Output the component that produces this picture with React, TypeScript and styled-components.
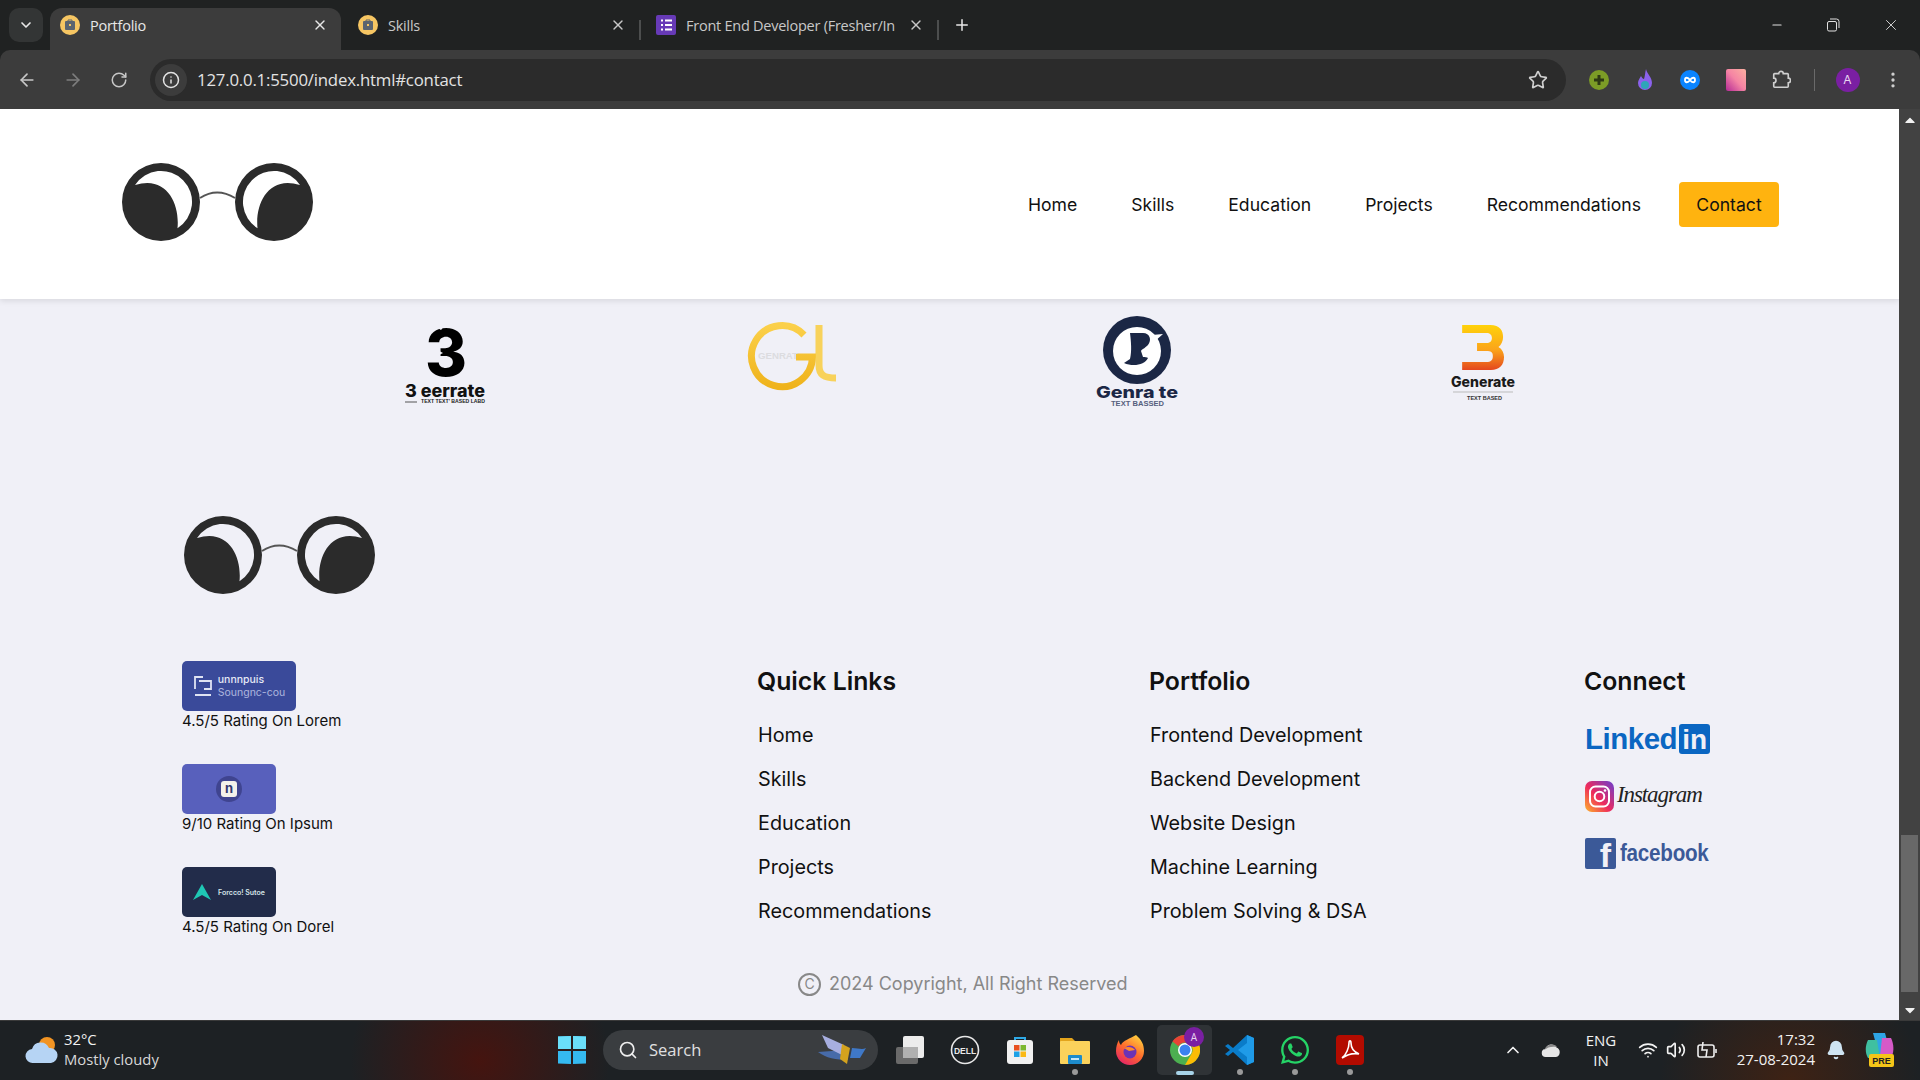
import { createGlobalStyle } from 'styled-components';
import styled from 'styled-components';
import {
  ArrowLeft, ArrowRight, Bell, ChevronDown, ChevronUp, Info, Minus, Plus,
  RotateCw, Search, Star, Volume2, Wifi, X, EllipsisVertical,
} from 'lucide-react';
import { FaWhatsapp, FaCaretUp, FaCaretDown } from 'react-icons/fa';

const GlobalStyle = createGlobalStyle`
  html, body { margin: 0; padding: 0; height: 100%; overflow: hidden; background: #202222; }
  * { box-sizing: border-box; }
  #root { height: 100vh; }
`;

const Screen = styled.div`
  display: flex;
  flex-direction: column;
  width: 1920px;
  height: 1080px;
  overflow: hidden;
  font-family: Inter, "Liberation Sans", sans-serif;
`;

/* ---------- browser chrome ---------- */

const TabStrip = styled.div`
  display: flex;
  align-items: flex-end;
  height: 50px;
  padding-left: 9px;
  background: #202222;
  font-family: "Open Sans", "Noto Sans", sans-serif;
`;

const TabMenu = styled.div`
  display: flex;
  align-items: center;
  justify-content: center;
  width: 34px;
  height: 34px;
  margin: 0 7px 8px 0;
  border-radius: 10px;
  background: #333535;
  color: #e8e8e8;
`;

const Tab = styled.div<{ $active?: boolean }>`
  display: flex;
  align-items: center;
  gap: 10px;
  width: 291px;
  height: 42px;
  padding: 0 13px 8px 10px;
  border-radius: 12px 12px 0 0;
  background: ${(p) => (p.$active ? '#3c3c3c' : 'transparent')};
  color: ${(p) => (p.$active ? '#e8e8e8' : '#c8c8c8')};
`;

const TabTitle = styled.span`
  flex: 1;
  overflow: hidden;
  font-size: 14.5px;
  letter-spacing: -0.25px;
  white-space: nowrap;
`;

const TabGap = styled.div<{ $line?: boolean }>`
  width: 7px;
  height: 20px;
  margin-bottom: 10px;
  border-left: ${(p) => (p.$line ? '2px solid #4c4e4e' : 'none')};
`;

const NewTab = styled.div`
  display: flex;
  margin: 0 auto 16px 9px;
  color: #e8e8e8;
`;

const WindowButtons = styled.div`
  display: flex;
  align-items: center;
  gap: 42px;
  padding: 0 20px 16px 0;
  color: #e0e0e0;
`;

const Toolbar = styled.div`
  display: flex;
  align-items: center;
  height: 59px;
  padding-left: 16px;
  background: #3c3c3c;
  border-radius: 10px 10px 0 0;
  color: #c7c7c7;
`;

const NavIcon = styled.div<{ $dim?: boolean }>`
  display: flex;
  justify-content: center;
  width: 22px;
  margin-right: 24px;
  color: ${(p) => (p.$dim ? '#7d7d7d' : '#c7c7c7')};
`;

const UrlBar = styled.div`
  display: flex;
  align-items: center;
  flex-shrink: 0;
  width: 1416px;
  height: 42px;
  margin-left: -4px;
  padding: 0 18px 0 5px;
  border-radius: 21px;
  background: #2b2b2b;
`;

const InfoBadge = styled.div`
  display: flex;
  align-items: center;
  justify-content: center;
  width: 32px;
  height: 32px;
  border-radius: 50%;
  background: #3c3c3c;
  color: #e3e3e3;
`;

const UrlText = styled.span`
  flex: 1;
  margin-left: 10px;
  color: #e3e3e3;
  font-family: "Open Sans", "Noto Sans", sans-serif;
  font-size: 16.8px;
  letter-spacing: -0.2px;
`;

const Extensions = styled.div`
  display: flex;
  align-items: center;
  margin-left: 23px;
`;

const ExtSlot = styled.div`
  display: flex;
  justify-content: center;
  width: 20px;
  margin-right: 25.5px;
`;

const ToolDivider = styled.div`
  width: 1px;
  height: 22px;
  margin: 0 21px 0 -3px;
  background: #6a6a6a;
`;

const Avatar = styled.div`
  display: flex;
  align-items: center;
  justify-content: center;
  width: 24px;
  height: 24px;
  margin-right: 23px;
  border-radius: 50%;
  background: #7a1fa2;
  color: #e8d5f0;
  font-size: 12px;
`;

/* ---------- page ---------- */

const Viewport = styled.div`
  display: flex;
  height: 911px;
`;

const Page = styled.main`
  flex: 1;
  overflow: hidden;
  background: #f0f0f7;
`;

const Header = styled.header`
  position: relative;
  display: flex;
  align-items: center;
  justify-content: space-between;
  height: 190px;
  padding: 0 120px;
  background: #fff;
  box-shadow: 0 2px 6px rgba(0, 0, 0, 0.1);
`;

const NavLinks = styled.nav`
  display: flex;
  align-items: center;
`;

const NavLink = styled.a`
  padding: 0 27px;
  color: #111;
  font-size: 17.6px;
  line-height: 45px;
`;

const ContactButton = styled.button`
  width: 100px;
  height: 45px;
  margin-left: 11px;
  border: none;
  border-radius: 4px;
  background: #ffb30f;
  color: #111;
  font-family: inherit;
  font-size: 17.6px;
`;

const Partners = styled.section`
  display: grid;
  grid-template-columns: repeat(4, 346px);
  height: 216px;
  padding: 15px 0 0 272px;
`;

const PartnerCell = styled.div`
  display: flex;
  justify-content: center;
`;

const Footer = styled.footer`
  padding-left: 182px;
`;

const FooterLogo = styled.div`
  height: 146px;
  padding-top: 1px;
`;

const FooterColumns = styled.div`
  display: grid;
  grid-template-columns: 575px 392px 435px auto;
`;

const RatingList = styled.div`
  display: flex;
  flex-direction: column;
  gap: 33px;
`;

const RatingLabel = styled.div`
  color: #111;
  font-size: 15px;
  line-height: 20px;
`;

const Badge = styled.div<{ $width: number; $bg: string }>`
  display: flex;
  align-items: center;
  justify-content: center;
  gap: 5px;
  width: ${(p) => p.$width}px;
  height: 50px;
  border-radius: 5px;
  background: ${(p) => p.$bg};
  color: #e6e9f6;
`;

const BadgeText = styled.div`
  font-size: 10.5px;
  font-weight: 500;
  line-height: 13px;
`;

const BadgeSub = styled.div`
  color: #aeb6de;
  font-weight: 400;
`;

const SmallBadgeText = styled.div`
  margin-left: 2px;
  color: #d5e4e8;
  font-size: 7px;
  font-weight: 600;
`;

const BadgeDisc = styled.div`
  display: flex;
  align-items: center;
  justify-content: center;
  width: 26px;
  height: 26px;
  border-radius: 50%;
  background: #3f4490;
`;

const BadgeTile = styled.div`
  width: 16px;
  height: 16px;
  border-radius: 3px;
  background: #f3f1ea;
  color: #34386f;
  font-size: 13px;
  font-weight: 700;
  line-height: 15px;
  text-align: center;
`;

const ColumnTitle = styled.h3`
  margin: 0 0 12px;
  color: #111;
  font-size: 24.8px;
  font-weight: 600;
  line-height: 40px;
`;

const LinkItem = styled.div`
  padding-left: 1px;
  color: #111;
  font-size: 19.8px;
  line-height: 44px;
`;

const SocialList = styled.div`
  display: flex;
  flex-direction: column;
  gap: 27px;
  padding: 11px 0 0 1px;
`;

const SocialRow = styled.div`
  display: flex;
  align-items: center;
  height: 30px;
`;

const LinkedInWord = styled.span`
  color: #0a66c2;
  font-family: "Liberation Sans", sans-serif;
  font-size: 29.5px;
  font-weight: 700;
  letter-spacing: -0.5px;
`;

const LinkedInBox = styled.span`
  display: flex;
  align-items: center;
  justify-content: center;
  width: 31px;
  height: 30px;
  margin-left: 2px;
  padding-top: 2px;
  border-radius: 3px;
  background: #0a66c2;
  color: #f0f0f7;
  font-family: "Liberation Sans", sans-serif;
  font-size: 28px;
  font-weight: 700;
`;

const InstagramWord = styled.span`
  margin: -2px 0 0 3px;
  color: #222;
  font-family: "Liberation Serif", serif;
  font-size: 23px;
  font-style: italic;
  letter-spacing: -1.1px;
`;

const FacebookBox = styled.span`
  display: block;
  width: 31px;
  height: 31px;
  padding: 4px 5px 0 0;
  border-radius: 2px;
  background: #3b5998;
  color: #f0f0f7;
  font-family: "Liberation Sans", sans-serif;
  font-size: 34px;
  font-weight: 700;
  line-height: 27px;
  text-align: right;
`;

const FacebookWord = styled.span`
  display: inline-block;
  margin-left: 4px;
  color: #3b5998;
  font-family: "Liberation Sans", sans-serif;
  font-size: 24px;
  font-weight: 700;
  letter-spacing: -0.3px;
  transform: scaleX(0.86);
  transform-origin: left center;
`;

const Copyright = styled.div`
  display: flex;
  align-items: center;
  gap: 8px;
  margin: 34px 0 0 616px;
  color: #888;
  font-size: 18px;
  line-height: 26px;
`;

const CopyrightMark = styled.span`
  display: flex;
  align-items: center;
  justify-content: center;
  width: 23px;
  height: 23px;
  border: 2px solid #888;
  border-radius: 50%;
  font-size: 14px;
`;

const Scrollbar = styled.div`
  display: flex;
  flex-direction: column;
  align-items: center;
  width: 21px;
  background: #424242;
  color: #f2f2f2;
`;

const ScrollArrow = styled.div`
  display: flex;
  height: 21px;
  align-items: center;
`;

const ScrollThumb = styled.div`
  width: 17px;
  height: 157px;
  margin: auto 0 7px;
  background: #686868;
`;

/* ---------- taskbar ---------- */

const Taskbar = styled.div`
  display: flex;
  align-items: center;
  height: 60px;
  padding: 0 0 2px 25px;
  border-top: 1px solid #3a3a3a;
  color: #f2f2f2;
  font-family: "Open Sans", "Noto Sans", sans-serif;
  background:
    radial-gradient(ellipse 130px 120px at 480px 40px, #45140f, transparent),
    radial-gradient(ellipse 130px 120px at 1790px 60px, #3e2214, transparent),
    #1d2124;
  & > * { flex-shrink: 0; }
`;

const Weather = styled.div`
  display: flex;
  align-items: center;
  gap: 5px;
  width: 532px;
`;

const WeatherText = styled.div`
  padding-bottom: 2px;
  font-size: 14.8px;
  line-height: 20px;
`;

const WeatherDim = styled.div`
  color: #d8d8d8;
`;

const SearchPill = styled.div`
  display: flex;
  align-items: center;
  width: 275px;
  height: 40px;
  margin: 0 4px 0 16px;
  padding: 0 8px 0 15px;
  border-radius: 20px;
  background: #3a3d40;
`;

const SearchLabel = styled.span`
  flex: 1;
  margin-left: 11px;
  color: #e0e0e0;
  font-size: 16.5px;
`;

const TaskSlot = styled.div<{ $selected?: boolean }>`
  position: relative;
  display: flex;
  align-items: center;
  justify-content: center;
  width: 55px;
  height: 50px;
  border-radius: 5px;
  background: ${(p) => (p.$selected ? '#2f3336' : 'transparent')};
`;

const RunDot = styled.span<{ $on?: boolean }>`
  position: absolute;
  left: 50%;
  bottom: 0;
  width: ${(p) => (p.$on ? '18px' : '6px')};
  height: ${(p) => (p.$on ? '4px' : '6px')};
  margin-left: ${(p) => (p.$on ? '-9px' : '-3px')};
  border-radius: 3px;
  background: ${(p) => (p.$on ? '#a7d3e8' : '#9a9a9a')};
`;

const Tray = styled.div`
  display: flex;
  align-items: center;
  margin-left: 124px;
`;

const TraySlot = styled.div<{ $w: number }>`
  display: flex;
  justify-content: center;
  width: ${(p) => p.$w}px;
`;

const LangBlock = styled.div`
  width: 56px;
  padding-right: 8px;
  font-size: 15px;
  line-height: 20px;
  text-align: center;
`;

const ClockBlock = styled.div`
  width: 90px;
  padding-bottom: 2px;
  font-size: 15px;
  line-height: 20px;
  white-space: nowrap;
  text-align: right;
`;

/* ---------- drawings ---------- */

const lens = 'M41 2a39 39 0 1 0 0 78a39 39 0 1 0 0-78Z';
const crescent = 'M15 24.100 A31 31 0 1 1 57.500 67.200 C60 42 46 14 15 24.100Z';

const Glasses = () => (
  <svg width="194" height="82" viewBox="0 2 194 82">
    <path d="M80 37 Q97 26 115 37" fill="none" stroke="#555" strokeWidth="2" />
    <path fillRule="evenodd" fill="#2b2b2b" d={`${lens} ${crescent}`} />
    <g transform="translate(195 0) scale(-1 1)">
      <path fillRule="evenodd" fill="#2b2b2b" d={`${lens} ${crescent}`} />
    </g>
  </svg>
);

const PartnerOne = () => (
  <svg width="84" height="90" viewBox="0 0 84 90">
    <text x="43" y="62" textAnchor="middle" fontFamily="Inter" fontWeight="800" fontSize="64" fill="#000">3</text>
    <path d="M22 8c8-7 18-5 22 1l-6 7c-4-3-8-4-16-8Z" fill="#f0f0f7" />
    <path d="M24 38c6-3 12-2 16 1l-8 4Z" fill="#f0f0f7" />
    <text x="2" y="83" fontFamily="Inter" fontWeight="800" fontSize="17" fill="#111" textLength="80" lengthAdjust="spacingAndGlyphs">3 eerrate</text>
    <path d="M2 88h12" stroke="#555" />
    <text x="18" y="89" fontFamily="Liberation Sans" fontWeight="700" fontSize="4.500" fill="#222" textLength="64" lengthAdjust="spacingAndGlyphs">TEXT TEXT' BASED LABD</text>
  </svg>
);

const PartnerTwo = () => (
  <svg width="94" height="72" viewBox="-3 0 94 72" style={{ marginTop: 6 }}>
    <defs>
      <linearGradient id="goldG" x1="0" y1="0" x2="0" y2="1">
        <stop offset="0" stopColor="#fbd04a" />
        <stop offset="1" stopColor="#efb31c" />
      </linearGradient>
    </defs>
    <path d="M57 15A30.500 30.500 0 1 0 65.500 37H49" fill="none" stroke="url(#goldG)" strokeWidth="7" />
    <path d="M72 5V45C72 55 77 58 89 58" fill="none" stroke="#f9cc3f" strokeWidth="7" opacity="0.85" />
    <text x="11" y="39" fontFamily="Liberation Sans" fontWeight="700" fontSize="9" fill="#dcdce0" textLength="40" lengthAdjust="spacingAndGlyphs">GENRAT</text>
  </svg>
);

const PartnerThree = () => (
  <svg width="84" height="92" viewBox="0 0 84 92" style={{ marginTop: 1 }}>
    <circle cx="42" cy="35" r="34" fill="#1b2745" />
    <circle cx="42" cy="36" r="24" fill="#fff" />
    <path d="M59 27l9-8-11 1Z" fill="#fff" />
    <path d="M35 18H48C55 18 57 25 53 30C49 34 47 34 46 36L48 42C50 42 52 42 53 43C50 50 38 52 29 48L35 44C37 36 36 26 35 18Z" fill="#1b2745" />
    <text x="1" y="83" fontFamily="Inter" fontWeight="800" fontSize="16.500" fill="#1b2745" textLength="82" lengthAdjust="spacingAndGlyphs">Genra te</text>
    <text x="16" y="91" fontFamily="Liberation Sans" fontWeight="700" fontSize="6.500" fill="#56607d" textLength="53" lengthAdjust="spacingAndGlyphs">TEXT BASSED</text>
  </svg>
);

const PartnerFour = () => (
  <svg width="66" height="80" viewBox="0 0 66 80" style={{ marginTop: 11 }}>
    <defs>
      <linearGradient id="threeG" x1="0" y1="0" x2="0" y2="1">
        <stop offset="0" stopColor="#ffd20a" />
        <stop offset="0.55" stopColor="#fba41a" />
        <stop offset="1" stopColor="#e4471f" />
      </linearGradient>
    </defs>
    <path
      transform="translate(1 0) scale(0.93 1)"
      d="M12 0h30c11 0 14 6 14 12 0 4-2 8-5 10 4 2 6 6 6 10 0 8-5 13-14 13H12v-8h26c5 0 7-2 7-6s-2-5-7-5H28v-8h10c4 0 6-2 6-5s-2-5-6-5H12Z"
      fill="url(#threeG)"
    />
    <text x="1" y="62" fontFamily="Inter" fontWeight="800" fontSize="14" fill="#1a1a1a" textLength="64" lengthAdjust="spacingAndGlyphs">Generate</text>
    <path d="M3 67h60" stroke="#bbb" />
    <text x="17" y="75" fontFamily="Liberation Sans" fontWeight="700" fontSize="5" fill="#333" textLength="35" lengthAdjust="spacingAndGlyphs">TEXT BASED</text>
  </svg>
);

const Favicon = () => (
  <svg width="20" height="20" viewBox="0 0 20 20">
    <circle cx="10" cy="10" r="10" fill="#f6c663" />
    <path d="M8 6V5h4v1" stroke="#5b6470" fill="none" />
    <rect x="5" y="6" width="10" height="9" rx="1" fill="#5b6470" />
    <rect x="9" y="9" width="2" height="2" fill="#f6c663" />
  </svg>
);

const FormsIcon = () => (
  <svg width="20" height="20" viewBox="0 0 20 20">
    <rect width="20" height="20" rx="2" fill="#673ab7" />
    <path d="M5 5.500h2M9 5.500h7M5 10h2M9 10h7M5 14.500h2M9 14.500h7" stroke="#fff" strokeWidth="2" />
  </svg>
);

const RestoreIcon = () => (
  <svg width="14" height="14" viewBox="0 0 14 14" fill="none" stroke="currentColor">
    <rect x="1.500" y="3.500" width="9" height="9.500" rx="1.500" />
    <path d="M4 1h6.500A2.500 2.500 0 0 1 13 3.500V10" />
  </svg>
);

const ExtPlus = () => (
  <svg width="20" height="20" viewBox="0 0 20 20">
    <circle cx="10" cy="10" r="10" fill="#7c9c26" />
    <path d="M10 5v10M5 10h10" stroke="#2e3a14" strokeWidth="3" />
  </svg>
);

const ExtFlame = () => (
  <svg width="20" height="22" viewBox="0 0 20 22">
    <path d="M11 0c1 5 6 8 6 14a7 7 0 0 1-14 0c0-3 2-5 3-7 1 2 2 3 3 3 1-3 1-6 2-10Z" fill="#8b62ec" />
    <circle cx="10" cy="16" r="4" fill="#2ea6b8" />
  </svg>
);

const ExtLoop = () => (
  <svg width="20" height="20" viewBox="0 0 20 20">
    <circle cx="10" cy="10" r="10" fill="#0a84ff" />
    <path d="M10 10c-2-3-5-3-5 0s3 3 5 0 5-3 5 0-3 3-5 0Z" fill="none" stroke="#fff" strokeWidth="1.800" />
  </svg>
);

const ExtSquare = () => (
  <svg width="20" height="22" viewBox="0 0 20 22">
    <defs>
      <linearGradient id="pinkG" x1="0" y1="1" x2="1" y2="0">
        <stop offset="0" stopColor="#b52a96" />
        <stop offset="0.5" stopColor="#f584a4" />
        <stop offset="1" stopColor="#fbb0a0" />
      </linearGradient>
    </defs>
    <rect width="20" height="22" rx="2" fill="url(#pinkG)" />
  </svg>
);

const ExtPuzzle = () => (
  <svg width="22" height="24" viewBox="0 0 22 24" fill="none" stroke="#cfcfcf" strokeWidth="1.800">
    <path d="M4 5h4.500a2.500 2.500 0 0 1 5 0H18a1 1 0 0 1 1 1v4a2.500 2.500 0 0 1 0 5v4a1 1 0 0 1-1 1H4a1 1 0 0 1-1-1v-4a2.500 2.500 0 0 0 0-5V6a1 1 0 0 1 1-1Z" />
  </svg>
);

const WeatherIcon = () => (
  <svg width="34" height="30" viewBox="0 0 34 30">
    <circle cx="22" cy="10" r="8" fill="#f29423" />
    <path d="M8 28a7 7 0 0 1-1-14 9 9 0 0 1 17-1 7.500 7.500 0 0 1 2 15Z" fill="#b6d4f4" />
  </svg>
);

const WindowsLogo = () => (
  <svg width="30" height="30" viewBox="0 0 30 30">
    <path d="M1 1.500 14 1v13H1ZM16 1l13 .5V14H16ZM1 16h13v13l-13-.5ZM16 16h13v12.500L16 29Z" fill="#35b9f0" />
    <path d="M1 1.500 14 1v13H1ZM16 1l13 .5V14H16Z" fill="#6adffa" />
  </svg>
);

const Satellite = () => (
  <svg width="56" height="36" viewBox="0 0 56 36">
    <path d="M4 20l28-2 2 10c-12 0-22-2-30-8Z" fill="#4d7fd6" opacity="0.7" />
    <path d="M8 3l22 10-2 10L14 16Z" fill="#a7aee0" />
    <path d="M28 12l8 4-3 16-7-5Z" fill="#d4a21e" />
    <path d="M38 16c6 0 10 2 14 0l-6 10-10 0Z" fill="#3f78c7" />
  </svg>
);

const TaskViewIcon = () => (
  <svg width="30" height="30" viewBox="0 0 30 30">
    <rect x="1" y="12" width="22" height="17" rx="2" fill="#6a6a6a" />
    <rect x="8" y="1" width="21" height="22" rx="2" fill="#ececec" />
    <rect x="8" y="12" width="15" height="11" fill="#b0b0b0" />
  </svg>
);

const DellIcon = () => (
  <svg width="30" height="30" viewBox="0 0 30 30">
    <circle cx="15" cy="15" r="13.500" fill="none" stroke="#e8e8e8" strokeWidth="1.600" />
    <text x="15" y="18.500" textAnchor="middle" fontFamily="Liberation Sans" fontWeight="700" fontSize="8.500" fill="#e8e8e8">DELL</text>
  </svg>
);

const StoreIcon = () => (
  <svg width="30" height="30" viewBox="0 0 30 30">
    <path d="M10 6V3h10v3" fill="none" stroke="#2ea9e6" strokeWidth="2" />
    <rect x="2" y="5" width="26" height="24" rx="3" fill="#f1f1f1" />
    <rect x="9" y="10" width="5.500" height="5.500" fill="#e8501f" />
    <rect x="15.500" y="10" width="5.500" height="5.500" fill="#7cb82f" />
    <rect x="9" y="16.500" width="5.500" height="5.500" fill="#1ea2e6" />
    <rect x="15.500" y="16.500" width="5.500" height="5.500" fill="#fab914" />
  </svg>
);

const FilesIcon = () => (
  <svg width="32" height="30" viewBox="0 0 32 30">
    <path d="M1 3h12l3 3v6H1Z" fill="#e3a41c" />
    <rect x="1" y="6" width="30" height="23" rx="1" fill="#fbd25b" />
    <rect x="9" y="20" width="14" height="9" rx="1" fill="#1d8ccc" />
    <rect x="12" y="23" width="8" height="2" fill="#c6e6f7" />
  </svg>
);

const FirefoxIcon = () => (
  <svg width="30" height="34" viewBox="0 0 30 32">
    <defs>
      <linearGradient id="foxG" x1="0.8" y1="0" x2="0.2" y2="1">
        <stop offset="0" stopColor="#ffd33e" />
        <stop offset="0.5" stopColor="#ff6b2c" />
        <stop offset="1" stopColor="#e3206a" />
      </linearGradient>
    </defs>
    <path d="M21 1c6 5 8 10 8 16a14 14 0 0 1-28 0c0-4 1-8 3-11 0 3 1 4 2 5 2-5 9-6 15-10Z" fill="url(#foxG)" />
    <circle cx="15" cy="18" r="6.500" fill="#6d33b5" />
    <path d="M9 14c4-2 9-1 11 2l-6 1Z" fill="#ff8a2c" />
  </svg>
);

const ChromeIcon = () => (
  <svg width="30" height="30" viewBox="0 0 30 30">
    <circle cx="15" cy="15" r="15" fill="#4caf50" />
    <path d="M15 0a15 15 0 0 1 13 7.500H15a7.500 7.500 0 0 0-6.500 3.750L2.500 6.500A15 15 0 0 1 15 0Z" fill="#ea4335" />
    <path d="M28 7.500A15 15 0 0 1 15 30l6.500-11.250A7.500 7.500 0 0 0 21.500 11Z" fill="#fbbc04" />
    <circle cx="15" cy="15" r="7" fill="#fff" />
    <circle cx="15" cy="15" r="5.500" fill="#3b82f0" />
  </svg>
);

const ProfileDot = styled.span`
  position: absolute;
  top: 2px;
  right: 8px;
  width: 20px;
  height: 20px;
  border-radius: 50%;
  background: #7a1fa2;
  color: #e8d5f0;
  font-size: 10px;
  line-height: 20px;
  text-align: center;
`;

const VsCodeIcon = () => (
  <svg width="30" height="32" viewBox="0 0 30 32">
    <path d="M22 1l7 3v24l-7 3L8 18l-5 4-3-2 5-4-5-4 3-2 5 4Z" fill="#0a7cc9" />
    <path d="M22 1l7 3v24l-7 3Zm0 8-9 7 9 7Z" fill="#1f9be8" fillRule="evenodd" />
  </svg>
);

const AcrobatIcon = () => (
  <svg width="28" height="30" viewBox="0 0 28 30">
    <rect width="28" height="30" rx="4" fill="#b30b00" />
    <path d="M6 23c4-3 7-10 7-15 0-3 2-3 2 0 0 5 3 9 8 11-5-1-11 0-17 4Z" fill="none" stroke="#fff" strokeWidth="1.600" />
  </svg>
);

const CopilotIcon = () => (
  <svg width="32" height="36" viewBox="0 0 32 36">
    <path d="M9 1h12l6 22H15Z" fill="#2ea5e6" />
    <path d="M18 6h9c3 6 3 13 1 18H16Z" fill="#d65ac8" />
    <path d="M4 8h9l3 18H4c-3-5-3-12 0-18Z" fill="#3fc0a0" />
    <rect x="5" y="22" width="25" height="13" rx="2" fill="#f5c518" />
    <text x="17.500" y="32" textAnchor="middle" fontFamily="Liberation Sans" fontWeight="700" fontSize="9" fill="#222">PRE</text>
  </svg>
);

const TrayCloud = () => (
  <svg width="20" height="16" viewBox="0 0 20 16">
    <path d="M5 15a4 4 0 0 1-.500-8 6 6 0 0 1 11-1.500A5 5 0 0 1 15 15Z" fill="#e6e6e6" />
    <path d="M3 8c3-6 10-7 13-3-5-1-9 0-13 3Z" fill="#8a8a8a" />
  </svg>
);

const BatteryIcon = () => (
  <svg width="22" height="22" viewBox="0 0 22 22" fill="none" stroke="#eee" strokeWidth="1.600">
    <rect x="2" y="6" width="16" height="12" rx="2" />
    <path d="M20 10v4M7 3l-1 8h5l-1 7" />
  </svg>
);

const InstagramIcon = () => (
  <svg width="29" height="31" viewBox="0 0 29 31">
    <defs>
      <linearGradient id="igG" x1="0" y1="1" x2="1" y2="0">
        <stop offset="0" stopColor="#fdb52a" />
        <stop offset="0.45" stopColor="#ee2a5c" />
        <stop offset="1" stopColor="#6a3fd0" />
      </linearGradient>
    </defs>
    <rect width="29" height="31" rx="7" fill="url(#igG)" />
    <rect x="5" y="5.500" width="19" height="20" rx="5.500" fill="none" stroke="#fff" strokeWidth="2" />
    <circle cx="14.500" cy="15.500" r="4.800" fill="none" stroke="#fff" strokeWidth="2" />
    <circle cx="20" cy="9.500" r="1.300" fill="#fff" />
  </svg>
);

const quickLinks = ['Home', 'Skills', 'Education', 'Projects', 'Recommendations'];
const portfolioLinks = [
  'Frontend Development',
  'Backend Development',
  'Website Design',
  'Machine Learning',
  'Problem Solving & DSA',
];

export default function App() {
  return (
    <Screen>
      <GlobalStyle />
      <TabStrip>
        <TabMenu><ChevronDown size={16} strokeWidth={2.5} /></TabMenu>
        <Tab $active>
          <Favicon />
          <TabTitle>Portfolio</TabTitle>
          <X size={16} />
        </Tab>
        <TabGap />
        <Tab>
          <Favicon />
          <TabTitle>Skills</TabTitle>
          <X size={16} />
        </Tab>
        <TabGap $line />
        <Tab>
          <FormsIcon />
          <TabTitle>Front End Developer (Fresher/In</TabTitle>
          <X size={16} />
        </Tab>
        <TabGap $line />
        <NewTab><Plus size={18} /></NewTab>
        <WindowButtons>
          <Minus size={14} />
          <RestoreIcon />
          <X size={18} strokeWidth={1.2} />
        </WindowButtons>
      </TabStrip>

      <Toolbar>
        <NavIcon><ArrowLeft size={20} /></NavIcon>
        <NavIcon $dim><ArrowRight size={20} /></NavIcon>
        <NavIcon><RotateCw size={18} /></NavIcon>
        <UrlBar>
          <InfoBadge><Info size={18} /></InfoBadge>
          <UrlText>127.0.0.1:5500/index.html#contact</UrlText>
          <Star size={20} color="#d0d0d0" />
        </UrlBar>
        <Extensions>
          <ExtSlot><ExtPlus /></ExtSlot>
          <ExtSlot><ExtFlame /></ExtSlot>
          <ExtSlot><ExtLoop /></ExtSlot>
          <ExtSlot><ExtSquare /></ExtSlot>
          <ExtSlot><ExtPuzzle /></ExtSlot>
          <ToolDivider />
          <Avatar>A</Avatar>
          <EllipsisVertical size={20} color="#cfcfcf" />
        </Extensions>
      </Toolbar>

      <Viewport>
        <Page>
          <Header>
            <Glasses />
            <NavLinks>
              {quickLinks.map((l) => <NavLink key={l}>{l}</NavLink>)}
              <ContactButton>Contact</ContactButton>
            </NavLinks>
          </Header>
          <Partners>
            <PartnerCell><PartnerOne /></PartnerCell>
            <PartnerCell><PartnerTwo /></PartnerCell>
            <PartnerCell><PartnerThree /></PartnerCell>
            <PartnerCell><PartnerFour /></PartnerCell>
          </Partners>
          <Footer>
            <FooterLogo><Glasses /></FooterLogo>
            <FooterColumns>
              <RatingList>
                <div>
                  <Badge $width={114} $bg="#3a4a9a">
                    <svg width="20" height="24" viewBox="0 0 20 24" fill="none" stroke="#dfe3f3" strokeWidth="1.800">
                      <path d="M2 15V3h8M6 7h12v8H11M2 21h16" />
                    </svg>
                    <BadgeText>unnnpuis<BadgeSub>Soungnc-cou</BadgeSub></BadgeText>
                  </Badge>
                  <RatingLabel>4.5/5 Rating On Lorem</RatingLabel>
                </div>
                <div>
                  <Badge $width={94} $bg="#5860bc">
                    <BadgeDisc><BadgeTile>n</BadgeTile></BadgeDisc>
                  </Badge>
                  <RatingLabel>9/10 Rating On Ipsum</RatingLabel>
                </div>
                <div>
                  <Badge $width={94} $bg="#222c4a">
                    <svg width="18" height="16" viewBox="0 0 18 16">
                      <path d="M9 0l9 16-9-5-9 5Z" fill="#1fc8b4" />
                    </svg>
                    <SmallBadgeText>Forcco! Sutoe</SmallBadgeText>
                  </Badge>
                  <RatingLabel>4.5/5 Rating On Dorel</RatingLabel>
                </div>
              </RatingList>
              <div>
                <ColumnTitle>Quick Links</ColumnTitle>
                {quickLinks.map((l) => <LinkItem key={l}>{l}</LinkItem>)}
              </div>
              <div>
                <ColumnTitle>Portfolio</ColumnTitle>
                {portfolioLinks.map((l) => <LinkItem key={l}>{l}</LinkItem>)}
              </div>
              <div>
                <ColumnTitle>Connect</ColumnTitle>
                <SocialList>
                  <SocialRow>
                    <LinkedInWord>Linked</LinkedInWord>
                    <LinkedInBox>in</LinkedInBox>
                  </SocialRow>
                  <SocialRow>
                    <InstagramIcon />
                    <InstagramWord>Instagram</InstagramWord>
                  </SocialRow>
                  <SocialRow>
                    <FacebookBox>f</FacebookBox>
                    <FacebookWord>facebook</FacebookWord>
                  </SocialRow>
                </SocialList>
              </div>
            </FooterColumns>
            <Copyright>
              <CopyrightMark>C</CopyrightMark>
              2024 Copyright, All Right Reserved
            </Copyright>
          </Footer>
        </Page>
        <Scrollbar>
          <ScrollArrow><FaCaretUp size={16} /></ScrollArrow>
          <ScrollThumb />
          <ScrollArrow><FaCaretDown size={16} /></ScrollArrow>
        </Scrollbar>
      </Viewport>

      <Taskbar>
        <Weather>
          <WeatherIcon />
          <WeatherText>
            32°C
            <WeatherDim>Mostly cloudy</WeatherDim>
          </WeatherText>
        </Weather>
        <WindowsLogo />
        <SearchPill>
          <Search size={20} color="#eee" />
          <SearchLabel>Search</SearchLabel>
          <Satellite />
        </SearchPill>
        <TaskSlot><TaskViewIcon /></TaskSlot>
        <TaskSlot><DellIcon /></TaskSlot>
        <TaskSlot><StoreIcon /></TaskSlot>
        <TaskSlot><FilesIcon /><RunDot /></TaskSlot>
        <TaskSlot><FirefoxIcon /></TaskSlot>
        <TaskSlot $selected>
          <ChromeIcon />
          <ProfileDot>A</ProfileDot>
          <RunDot $on />
        </TaskSlot>
        <TaskSlot><VsCodeIcon /><RunDot /></TaskSlot>
        <TaskSlot><FaWhatsapp size={32} color="#25d366" /><RunDot /></TaskSlot>
        <TaskSlot><AcrobatIcon /><RunDot /></TaskSlot>
        <Tray>
          <TraySlot $w={24}><ChevronUp size={20} /></TraySlot>
          <TraySlot $w={52}><TrayCloud /></TraySlot>
          <LangBlock>ENG<br />IN</LangBlock>
          <TraySlot $w={30}><Wifi size={20} /></TraySlot>
          <TraySlot $w={26}><Volume2 size={20} /></TraySlot>
          <TraySlot $w={36}><BatteryIcon /></TraySlot>
          <ClockBlock>17:32<br />27-08-2024</ClockBlock>
          <TraySlot $w={42}><Bell size={20} fill="#cfe4f2" color="#cfe4f2" /></TraySlot>
          <TraySlot $w={46}><CopilotIcon /></TraySlot>
        </Tray>
      </Taskbar>
    </Screen>
  );
}
